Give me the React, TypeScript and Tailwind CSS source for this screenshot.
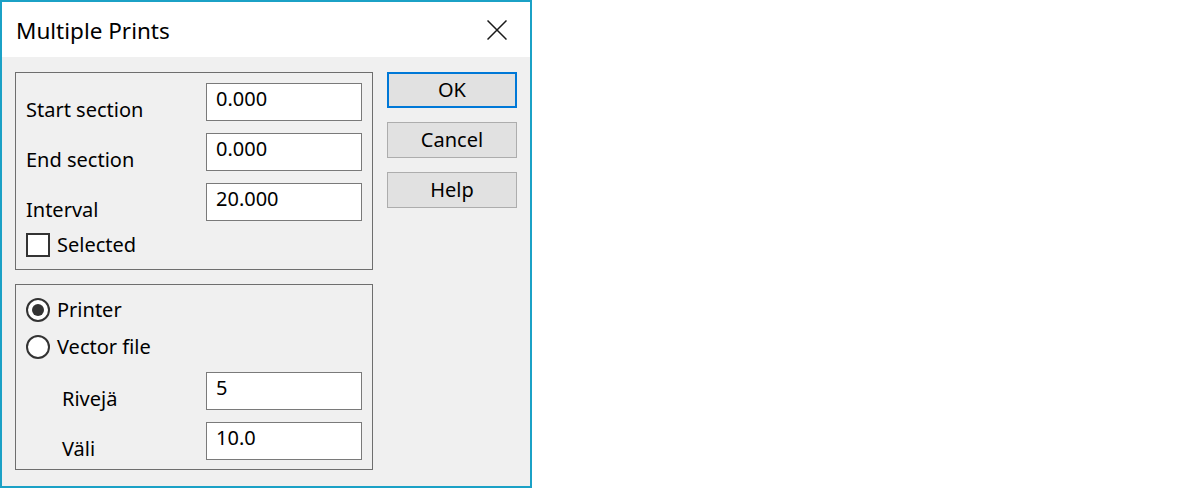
import React, { useState } from 'react';

const font = { fontFamily: '"Noto Sans", "Liberation Sans", sans-serif' };

function Field({ label, value, indent }: { label: string; value: string; indent?: boolean }) {
  return (
    <div className="flex h-[38px]">
      <div className={`${indent ? 'pl-[46px]' : 'pl-[10px]'} w-[190px] pt-[15px] leading-[24px]`}>{label}</div>
      <div className="h-[38px] w-[156px] border border-[#7a7a7a] bg-white px-[9px] pt-[3px] leading-[24px]">
        {value}
      </div>
    </div>
  );
}

function Radio({ label, checked, onClick }: { label: string; checked: boolean; onClick: () => void }) {
  return (
    <div className="flex h-[24px] cursor-default items-center pl-[10px]" onClick={onClick}>
      <div className="flex h-[24px] w-[24px] items-center justify-center rounded-full border-2 border-[#333333] bg-white">
        {checked && <div className="h-[12px] w-[12px] rounded-full bg-[#333333]" />}
      </div>
      <span className="ml-[7px] leading-[24px]">{label}</span>
    </div>
  );
}

export default function App() {
  const [mode, setMode] = useState<'printer' | 'vector'>('printer');
  const [selected, setSelected] = useState(false);

  return (
    <div className="h-[488px] w-[1200px] bg-white text-[20px] text-black" style={font}>
      <div className="flex h-[488px] w-[532px] flex-col border-2 border-[#1ba1c6]">
        {/* Title bar */}
        <div className="flex h-[55px] shrink-0 items-center justify-between bg-white">
          <span className="pl-[14px] pt-[2px] text-[22.5px] leading-[28px]">Multiple Prints</span>
          <svg width="20" height="20" viewBox="0 0 20 20" className="mr-[23px] mt-[1px]">
            <path d="M0.5 0.5 L19.5 19.5 M19.5 0.5 L0.5 19.5" stroke="#1a1a1a" strokeWidth="1.5" fill="none" />
          </svg>
        </div>

        {/* Body */}
        <div className="flex flex-1 bg-[#f0f0f0] pl-[13px] pt-[15px]">
          <div className="flex w-[358px] flex-col gap-[14px]">
            <div className="flex h-[198px] flex-col border border-[#6e6e6e] pt-[10px]">
              <div className="flex flex-col gap-[12px]">
                <Field label="Start section" value="0.000" />
                <Field label="End section" value="0.000" />
                <Field label="Interval" value="20.000" />
              </div>
              <div
                className="mt-[12px] flex h-[24px] cursor-default items-center pl-[10px]"
                onClick={() => setSelected(!selected)}
              >
                <div className="flex h-[24px] w-[24px] items-center justify-center border-2 border-[#333333] bg-white">
                  {selected && (
                    <svg width="16" height="16" viewBox="0 0 16 16">
                      <path d="M2 8 L6 12 L14 3" stroke="#333333" strokeWidth="2" fill="none" />
                    </svg>
                  )}
                </div>
                <span className="ml-[7px] leading-[24px]">Selected</span>
              </div>
            </div>

            <div className="flex h-[186px] flex-col border border-[#6e6e6e] pt-[13px]">
              <Radio label="Printer" checked={mode === 'printer'} onClick={() => setMode('printer')} />
              <div className="mt-[13px]">
                <Radio label="Vector file" checked={mode === 'vector'} onClick={() => setMode('vector')} />
              </div>
              <div className="mt-[13px] flex flex-col gap-[12px]">
                <Field label="Rivejä" value="5" indent />
                <Field label="Väli" value="10.0" indent />
              </div>
            </div>
          </div>

          {/* Buttons */}
          <div className="ml-[14px] flex flex-col gap-[14px]">
            <button className="h-[36px] w-[130px] border-2 border-[#0078d7] bg-[#e1e1e1] leading-[24px]">OK</button>
            <button className="h-[36px] w-[130px] border border-[#adadad] bg-[#e1e1e1] leading-[24px]">Cancel</button>
            <button className="h-[36px] w-[130px] border border-[#adadad] bg-[#e1e1e1] leading-[24px]">Help</button>
          </div>
        </div>
      </div>
    </div>
  );
}
